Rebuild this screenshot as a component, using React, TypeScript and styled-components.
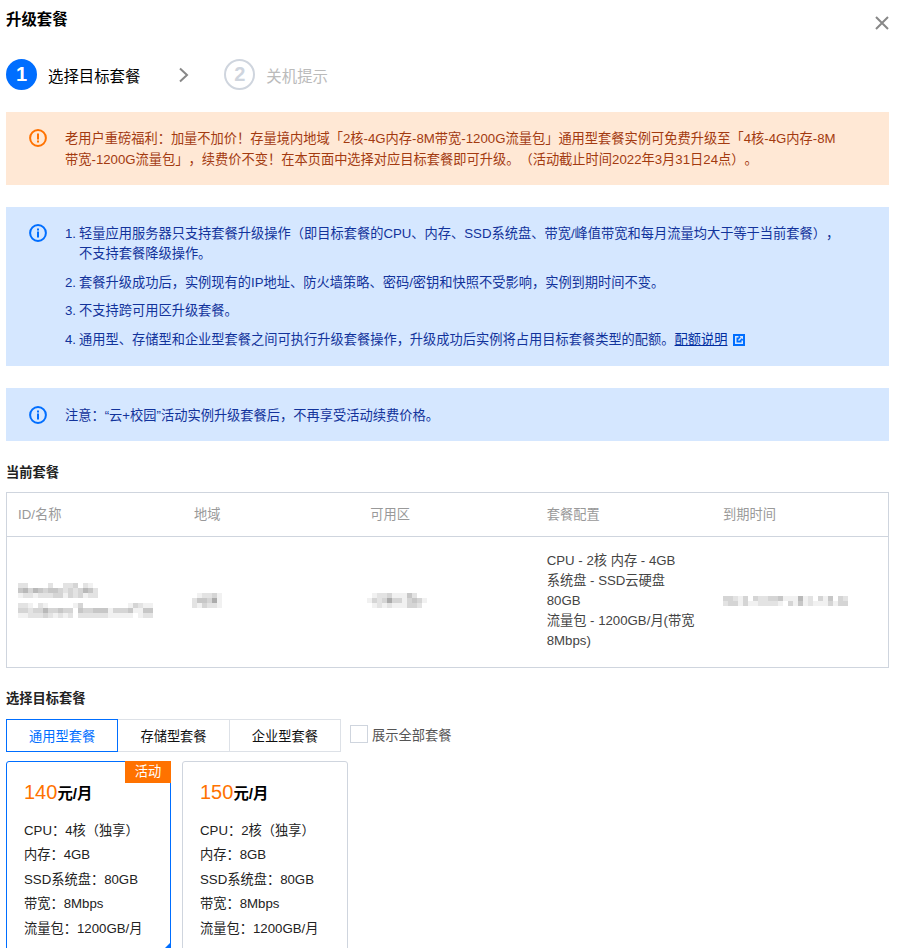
import React from 'react';
import styled, { createGlobalStyle } from 'styled-components';

const GlobalStyle = createGlobalStyle`
  html, body {
    margin: 0;
    padding: 0;
    height: 948px;
    overflow: hidden;
    background: #fff;
  }
  body {
    font-family: "Liberation Sans", "Noto Sans CJK SC", sans-serif;
    font-size: 13.24px;
    color: #333;
    text-spacing-trim: space-all;
  }
`;

const Dialog = styled.div`
  position: relative;
  width: 883px;
  padding: 10px 21px 0 6px;
`;

const Title = styled.h2`
  margin: 0;
  font-size: 15.4px;
  line-height: 20px;
  font-weight: 700;
  color: #000;
`;

const CloseButton = styled.svg`
  position: absolute;
  top: 16px;
  right: 21px;
  width: 14px;
  height: 14px;
`;

const Steps = styled.div`
  display: flex;
  align-items: center;
  height: 31px;
  margin: 29px 0 22px;
`;

const StepNumber = styled.span<{ $active?: boolean }>`
  box-sizing: border-box;
  display: flex;
  align-items: center;
  justify-content: center;
  width: 31px;
  height: 31px;
  border-radius: 50%;
  font-size: 20px;
  font-weight: 700;
  color: ${p => (p.$active ? '#fff' : '#cfd5de')};
  background: ${p => (p.$active ? '#006eff' : '#fff')};
  border: 2px solid ${p => (p.$active ? '#006eff' : '#cfd5de')};
`;

const StepLabel = styled.span<{ $active?: boolean }>`
  margin-left: 11px;
  font-size: 15.4px;
  color: ${p => (p.$active ? '#000' : '#bbb')};
`;

const StepArrow = styled.svg`
  width: 12px;
  height: 16px;
  margin: 0 35px 0 37px;
`;

const Alert = styled.div<{ $warn?: boolean; $top: number; $bottom: number }>`
  display: flex;
  gap: 18px;
  padding: ${p => p.$top}px 0 ${p => p.$bottom}px 23px;
  margin-bottom: 22px;
  line-height: ${p => (p.$warn ? '21px' : '20px')};
  background: ${p => (p.$warn ? '#ffe8d5' : '#d5e7ff')};
  color: ${p => (p.$warn ? '#a33a10' : '#12339b')};
`;

const AlertIcon = styled.svg<{ $nudge?: number }>`
  flex: none;
  width: 18px;
  height: 18px;
  margin-top: ${p => p.$nudge ?? 0}px;
`;

const NoticeList = styled.ol`
  margin: 0;
  padding: 0;
  list-style: none;
`;

const NoticeItem = styled.li`
  display: flex;
  gap: 3px;
  & + & {
    margin-top: 8.67px;
  }
`;

const NoticeIndex = styled.span`
  flex: none;
  width: 11px;
`;

const QuotaLink = styled.a`
  color: #002da0;
  text-decoration: underline;
`;

const LinkIcon = styled.svg`
  width: 12px;
  height: 12px;
  margin-left: 6px;
  vertical-align: -2px;
`;

const SectionTitle = styled.h3`
  margin: 21px 0 9px;
  font-size: 13.24px;
  line-height: 20px;
  font-weight: 700;
  color: #222;
`;

const PlanTable = styled.table`
  width: 100%;
  table-layout: fixed;
  border-collapse: collapse;
  border: 1px solid #cfd5de;
`;

const HeadCell = styled.th`
  height: 41px;
  padding: 0 11px 2px;
  text-align: left;
  font-weight: 400;
  color: #999;
  border-bottom: 1px solid #cfd5de;
`;

const BodyCell = styled.td`
  height: 128px;
  padding: 0 11px 2px;
  line-height: 20px;
  vertical-align: middle;
  color: #444;
`;

const Blur = styled.svg<{ $shift?: number }>`
  display: block;
  margin-left: ${p => p.$shift ?? 0}px;
`;

const BlurStack = styled.div`
  display: flex;
  flex-direction: column;
  gap: 5px;
`;

const CELL = 5;

// pixelated text from the screenshot, one digit per cell (0 white, 6 darkest)
const Mosaic = ({ rows, shift }: { rows: string[]; shift?: number }) => (
  <Blur width={rows[0].length * CELL} height={rows.length * CELL} $shift={shift}>
    {rows.map((row, y) =>
      row.split('').map((c, x) => {
        const g = 255 - Number(c) * 14;
        return c === '0' ? null : (
          <rect key={`${x}-${y}`} x={x * CELL} y={y * CELL} width={CELL} height={CELL} fill={`rgb(${g},${g},${g})`} />
        );
      }),
    )}
  </Blur>
);

const TabRow = styled.div`
  display: flex;
  align-items: center;
  margin-top: 10px;
`;

const Tab = styled.div<{ $active?: boolean }>`
  box-sizing: border-box;
  display: flex;
  align-items: center;
  justify-content: center;
  width: 112.33px;
  height: 33px;
  margin-left: -1px;
  color: ${p => (p.$active ? '#006eff' : '#111')};
  border: 1px solid ${p => (p.$active ? '#006eff' : '#dde1e7')};
  position: relative;
  z-index: ${p => (p.$active ? 1 : 0)};
  &:first-child {
    margin-left: 0;
  }
`;

const CheckLabel = styled.label`
  display: flex;
  align-items: center;
  gap: 4px;
  margin-left: 9px;
  margin-top: -2px;
  color: #555;
`;

const CheckBox = styled.span`
  box-sizing: border-box;
  width: 18px;
  height: 18px;
  border: 1px solid #cfd5de;
  background: #fff;
`;

const CardRow = styled.div`
  display: flex;
  gap: 11px;
  margin-top: 9px;
`;

const Card = styled.div<{ $active?: boolean }>`
  position: relative;
  box-sizing: border-box;
  width: ${p => (p.$active ? 165 : 166)}px;
  height: 190px;
  padding: 17px 0 0 17px;
  border: 1px solid ${p => (p.$active ? '#006eff' : '#cfd5de')};
  border-radius: 3px;
  ${p =>
    p.$active &&
    `
    &::after {
      content: '';
      position: absolute;
      right: 0;
      bottom: 0;
      border-style: solid;
      border-width: 0 0 7px 7px;
      border-color: transparent transparent #006eff transparent;
    }
  `}
`;

const Badge = styled.span`
  position: absolute;
  top: -1px;
  right: -1px;
  width: 46px;
  height: 22px;
  line-height: 21px;
  text-align: center;
  color: #fff;
  background: #ff7200;
`;

const Price = styled.div`
  line-height: 26px;
  font-size: 15.4px;
  font-weight: 700;
  color: #000;
`;

const Amount = styled.span`
  font-size: 20px;
  font-weight: 400;
  color: #ff7200;
`;

const SpecList = styled.div`
  margin-top: 12px;
  line-height: 24.4px;
  color: #222;
`;

const InfoIcon = () => (
  <AlertIcon viewBox="0 0 18 18" fill="none">
    <circle cx="9" cy="9" r="7.9" stroke="#006eff" strokeWidth="2" />
    <rect x="8" y="7.5" width="2" height="6" fill="#006eff" />
    <rect x="8" y="4.5" width="2" height="2" fill="#006eff" />
  </AlertIcon>
);

const WarnIcon = () => (
  <AlertIcon viewBox="0 0 18 18" fill="none" $nudge={1}>
    <circle cx="9" cy="9" r="7.9" stroke="#ff7200" strokeWidth="2" />
    <rect x="8" y="4.5" width="2" height="6" fill="#ff7200" />
    <rect x="8" y="11.5" width="2" height="2" fill="#ff7200" />
  </AlertIcon>
);

const plans = [
  { price: 140, cpu: 4, memory: 4, active: true },
  { price: 150, cpu: 2, memory: 8, active: false },
];

const App = () => {
  return (
    <Dialog>
      <GlobalStyle />
      <Title>升级套餐</Title>
      <CloseButton viewBox="0 0 14 14">
        <path d="M1 1l12 12M13 1L1 13" stroke="#888" strokeWidth="2" fill="none" />
      </CloseButton>

      <Steps>
        <StepNumber $active>1</StepNumber>
        <StepLabel $active>选择目标套餐</StepLabel>
        <StepArrow viewBox="0 0 12 16">
          <path d="M3 1.5l7 6.5-7 6.5" stroke="#888" strokeWidth="2" fill="none" />
        </StepArrow>
        <StepNumber>2</StepNumber>
        <StepLabel>关机提示</StepLabel>
      </Steps>

      <Alert $warn $top={16} $bottom={15}>
        <WarnIcon />
        <div>
          老用户重磅福利：加量不加价！存量境内地域「2核-4G内存-8M带宽-1200G流量包」通用型套餐实例可免费升级至「4核-4G内存-8M
          <br />
          带宽-1200G流量包」，续费价不变！在本页面中选择对应目标套餐即可升级。（活动截止时间2022年3月31日24点）。
        </div>
      </Alert>

      <Alert $top={17} $bottom={16}>
        <InfoIcon />
        <NoticeList>
          <NoticeItem>
            <NoticeIndex>1.</NoticeIndex>
            <span>
              轻量应用服务器只支持套餐升级操作（即目标套餐的CPU、内存、SSD系统盘、带宽/峰值带宽和每月流量均大于等于当前套餐），
              <br />
              不支持套餐降级操作。
            </span>
          </NoticeItem>
          <NoticeItem>
            <NoticeIndex>2.</NoticeIndex>
            <span>套餐升级成功后，实例现有的IP地址、防火墙策略、密码/密钥和快照不受影响，实例到期时间不变。</span>
          </NoticeItem>
          <NoticeItem>
            <NoticeIndex>3.</NoticeIndex>
            <span>不支持跨可用区升级套餐。</span>
          </NoticeItem>
          <NoticeItem>
            <NoticeIndex>4.</NoticeIndex>
            <span>
              通用型、存储型和企业型套餐之间可执行升级套餐操作，升级成功后实例将占用目标套餐类型的配额。
              <QuotaLink>配额说明</QuotaLink>
              <LinkIcon viewBox="0 0 12 12">
                <path d="M0 0h12v12H0z" fill="#006eff" />
                <path d="M2 2h3.5v1.5H3.5v5h5V6.5H10V10H2z" fill="#d5e7ff" />
                <path d="M6.5 2H10v3.5L8.8 4.3 6 7 5 6l2.7-2.8z" fill="#d5e7ff" />
              </LinkIcon>
            </span>
          </NoticeItem>
        </NoticeList>
      </Alert>

      <Alert $top={18} $bottom={15}>
        <InfoIcon />
        <div>注意：“云+校园”活动实例升级套餐后，不再享受活动续费价格。</div>
      </Alert>

      <SectionTitle>当前套餐</SectionTitle>
      <PlanTable>
        <thead>
          <tr>
            <HeadCell>ID/名称</HeadCell>
            <HeadCell>地域</HeadCell>
            <HeadCell>可用区</HeadCell>
            <HeadCell>套餐配置</HeadCell>
            <HeadCell>到期时间</HeadCell>
          </tr>
        </thead>
        <tbody>
          <tr>
            <BodyCell>
              <BlurStack>
                <Mosaic rows={['2200002002230210', '4535434432323542', '1221222331323122']} />
                <Mosaic rows={['221021000001300000000013211', '332335334330433444133341144', '112223212120222222111110122']} />
              </BlurStack>
            </BodyCell>
            <BodyCell>
              <Mosaic shift={-2} rows={['012231', '244361', '213221']} />
            </BodyCell>
            <BodyCell>
              <Mosaic shift={-3} rows={['012231114200', '132363313431', '012121113320']} />
            </BodyCell>
            <BodyCell>
              CPU - 2核 内存 - 4GB
              <br />
              系统盘 - SSD云硬盘
              <br />
              80GB
              <br />
              流量包 - 1200GB/月(带宽
              <br />
              8Mbps)
            </BodyCell>
            <BodyCell>
              <Mosaic rows={['3321303223341115120314032', '2331311222210314121113133']} />
            </BodyCell>
          </tr>
        </tbody>
      </PlanTable>

      <SectionTitle>选择目标套餐</SectionTitle>
      <TabRow>
        <Tab $active>通用型套餐</Tab>
        <Tab>存储型套餐</Tab>
        <Tab>企业型套餐</Tab>
        <CheckLabel>
          <CheckBox />
          展示全部套餐
        </CheckLabel>
      </TabRow>

      <CardRow>
        {plans.map(plan => (
          <Card key={plan.price} $active={plan.active}>
            {plan.active && <Badge>活动</Badge>}
            <Price>
              <Amount>{plan.price}</Amount>元/月
            </Price>
            <SpecList>
              CPU：{plan.cpu}核（独享）
              <br />
              内存：{plan.memory}GB
              <br />
              SSD系统盘：80GB
              <br />
              带宽：8Mbps
              <br />
              流量包：1200GB/月
            </SpecList>
          </Card>
        ))}
      </CardRow>
    </Dialog>
  );
};

export default App;
